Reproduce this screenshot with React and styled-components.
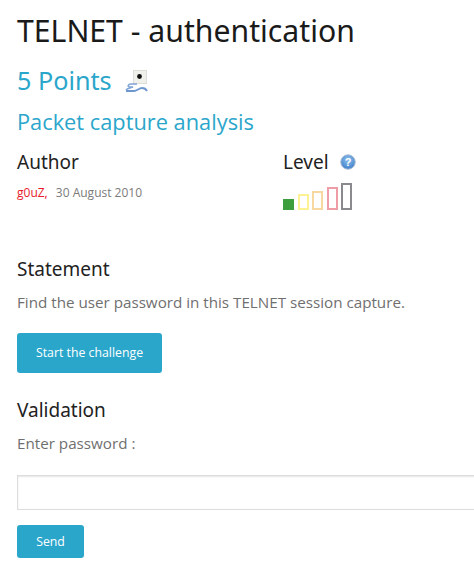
import React from "react";
import styled, { createGlobalStyle } from "styled-components";

const Global = createGlobalStyle`
  html, body { margin: 0; padding: 0; background: #fff; overflow: hidden; }
  body { font-family: "Open Sans", "Noto Sans", sans-serif; }
`;
const Page = styled.main`
  width: 474px; height: 571px; overflow: hidden; box-sizing: border-box;
  padding: 9px 0 0 17px; display: flex; flex-direction: column;
`;
const Title = styled.h1`
  margin: 0; font: 400 30.2px/44px "Noto Sans", sans-serif; color: #1a1a1a; white-space: nowrap;
`;
const Points = styled.h2`
  margin: 9px 0 0; font: 400 25.2px/36px "Noto Sans", sans-serif; color: #2ba6cb;
  display: flex; align-items: center; gap: 12px;
`;
const Sub = styled.h3`
  margin: 9px 0 0; font: 400 21.8px/30px "Open Sans", sans-serif; color: #2ba6cb;
`;
const Columns = styled.section`
  margin-top: 10px; display: grid; grid-template-columns: 266px 1fr; height: 78px;
`;
const Heading = styled.h4`
  margin: 0; font: 400 19px/30px "Noto Sans", sans-serif; color: #222;
  display: flex; align-items: center; gap: 11px;
`;
const Meta = styled.p`
  margin: 7px 0 0; font-size: 12px; line-height: 18px; color: #7b7b7b;
`;
const AuthorName = styled.span`
  color: #e8192c; margin-right: 5px;
`;
const Bars = styled.div`
  display: flex; align-items: flex-end; gap: 3.5px; margin-top: 6px;
`;
const Bar = styled.span`
  display: block; box-sizing: border-box; width: 11px; height: ${p => p.$h}px;
  border: 2px solid ${p => p.$c}; background: ${p => p.$fill ? p.$c : "transparent"};
`;
const Statement = styled.section`
  margin-top: 29px;
`;
const Text = styled.p`
  margin: 7px 0 0; font-size: 15.2px; line-height: 22px; color: #6f6f6f; white-space: nowrap;
`;
const Button = styled.button`
  display: block; border: 0; border-radius: 3px; background: #2ba6cb; color: #fff;
  font: 400 12.3px/18px "Open Sans", sans-serif; padding: 0; cursor: pointer;
  width: ${p => p.$w}px; height: ${p => p.$h}px; margin-top: ${p => p.$mt}px;
`;
const Validation = styled.section`
  margin-top: 22px;
`;
const Input = styled.input`
  display: block; box-sizing: border-box; width: 480px; height: 35px; margin-top: 21px;
  border: 1px solid #ddd; box-shadow: inset 0 1px 2px rgba(0,0,0,.1); background: #fff; padding: 0 8px;
`;

const Camera = () => (
  <svg width="24" height="24" viewBox="0 0 24 24" aria-hidden="true">
    <rect x="9.5" y="2.5" width="13" height="13" fill="#f1f1ec" stroke="#dededa" />
    <circle cx="15.5" cy="8.5" r="2.4" fill="#111" />
    <path d="M13 16 H7 C4 16 3 19 6 19 H9 C6 20 3 20 2 22" fill="none" stroke="#7ea3d6" strokeWidth="1.6" />
    <path d="M2 23 H10 C13 23 15 20 18 20 C20 20 22 21 23 23" fill="none" stroke="#6f97cf" strokeWidth="1.8" />
  </svg>
);
const Help = () => (
  <svg width="16" height="16" viewBox="0 0 16 16" aria-hidden="true">
    <defs>
      <radialGradient id="h" cx="50%" cy="35%" r="65%">
        <stop offset="0" stopColor="#8fc1ef" />
        <stop offset="1" stopColor="#3f7fc9" />
      </radialGradient>
    </defs>
    <circle cx="8" cy="8" r="7.3" fill="url(#h)" stroke="#b4c4d8" />
    <text x="8" y="12" textAnchor="middle" fontSize="11" fontWeight="700" fontFamily="Liberation Sans, sans-serif" fill="#fff">?</text>
  </svg>
);

export default function App() {
  return (
    <Page>
      <Global />
      <Title>TELNET - authentication</Title>
      <Points>5 Points <Camera /></Points>
      <Sub>Packet capture analysis</Sub>
      <Columns>
        <div>
          <Heading>Author</Heading>
          <Meta><AuthorName>g0uZ,</AuthorName> 30 August 2010</Meta>
        </div>
        <div>
          <Heading>Level <Help /></Heading>
          <Bars>
            <Bar $h={11} $c="#3c9e3c" $fill />
            <Bar $h={16} $c="#fdf293" />
            <Bar $h={19} $c="#f6d8a0" />
            <Bar $h={23} $c="#ee9ca6" />
            <Bar $h={27} $c="#8a8a8e" />
          </Bars>
        </div>
      </Columns>
      <Statement>
        <Heading>Statement</Heading>
        <Text>Find the user password in this TELNET session capture.</Text>
      </Statement>
      <Button $w={145} $h={40} $mt={20}>Start the challenge</Button>
      <Validation>
        <Heading>Validation</Heading>
        <Text>Enter password :</Text>
      </Validation>
      <Input type="text" aria-label="password" />
      <Button $w={67} $h={33} $mt={15}>Send</Button>
    </Page>
  );
}
